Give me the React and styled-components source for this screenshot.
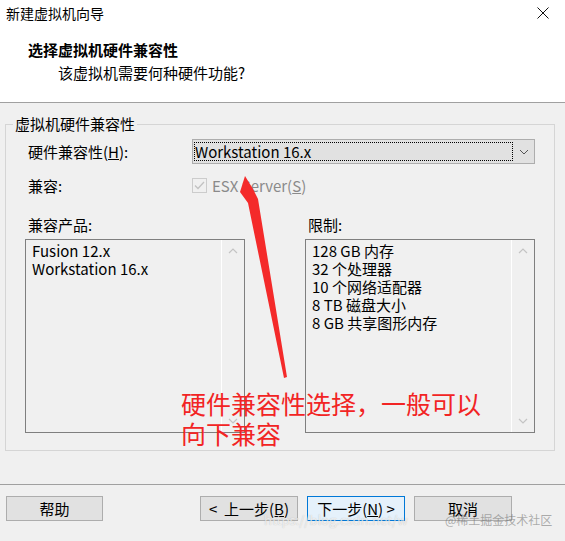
import React from 'react';
import styled, { createGlobalStyle } from 'styled-components';

const GlobalStyle = createGlobalStyle`
  html, body {
    margin: 0;
    padding: 0;
  }
  body {
    width: 565px;
    height: 541px;
    overflow: hidden;
    background: #f0f0f0;
    font-family: "Noto Sans CJK SC", "Noto Sans", sans-serif;
    font-size: 15px;
    color: #000;
  }
`;

const Window = styled.div`
  position: relative;
  width: 565px;
  height: 541px;
  display: flex;
  flex-direction: column;
  background: #f0f0f0;
  overflow: hidden;
`;

const Header = styled.header`
  height: 102px;
  background: #fff;
  border-bottom: 1px solid #a0a0a0;
  display: flex;
  flex-direction: column;
`;

const TitleBar = styled.div`
  height: 26px;
  display: flex;
  align-items: center;
  justify-content: space-between;
  padding: 0 16px 0 6px;
  font-size: 14px;
`;

const Heading = styled.div`
  margin: 13px 0 0 28px;
  line-height: 22px;
  font-weight: 700;
`;

const SubHeading = styled.div`
  margin: 1px 0 0 58px;
  line-height: 22px;
`;

const Body = styled.main`
  flex: 1;
  padding: 0 10px 0 5px;
`;

const Group = styled.fieldset`
  margin: 11px 0 0 0;
  padding: 0 0 17px 0;
  min-width: 0;
  border: 1px solid #d5d5d5;
`;

const Legend = styled.legend`
  margin-left: 7px;
  padding: 0 2px;
  line-height: 20px;
`;

const Content = styled.div`
  padding: 0 19px;
`;

const FieldRow = styled.div`
  display: grid;
  grid-template-columns: 167px 1fr;
  align-items: center;
  height: ${(p) => p.$h}px;
  margin-top: ${(p) => p.$mt}px;
`;

const Label = styled.span`
  padding-left: 3px;
`;

const Combo = styled.div`
  height: 25px;
  box-sizing: border-box;
  border: 1px solid #adadad;
  background: #e1e1e1;
  display: flex;
  align-items: stretch;
  padding: 2px 0 2px 1px;
`;

const Focus = styled.div`
  flex: 1;
  border: 1px dotted #000;
  line-height: 17px;
`;

const ArrowBox = styled.div`
  width: 21px;
  display: flex;
  align-items: center;
  justify-content: center;
`;

const Check = styled.div`
  display: flex;
  align-items: center;
  gap: 5px;
  color: #8a8a8a;
`;

const CheckBox = styled.span`
  width: 13px;
  height: 13px;
  border: 1px solid #cccccc;
  background: #f0f0f0;
  display: flex;
  align-items: center;
  justify-content: center;
`;

const Columns = styled.div`
  display: grid;
  grid-template-columns: 220px 1fr;
  column-gap: 60px;
  margin-top: 21px;
`;

const Column = styled.div`
  display: flex;
  flex-direction: column;
`;

const ListBox = styled.div`
  margin-top: 4px;
  height: 194px;
  box-sizing: border-box;
  border: 1px solid #7f7f7f;
  display: flex;
`;

const Items = styled.div`
  flex: 1;
  padding: 2px 6px;
  line-height: 18px;
`;

const Scroll = styled.div`
  width: 22px;
  border-left: 1px solid #ffffff;
  display: flex;
  flex-direction: column;
  justify-content: space-between;
  align-items: center;
  padding: 8px 0;
`;

const Footer = styled.footer`
  height: 45px;
  border-top: 1px solid #a0a0a0;
  display: flex;
  align-items: flex-start;
  padding: 11px 53px 0 6px;
  gap: 9px;
`;

const Button = styled.button`
  width: ${(p) => p.$w || 98}px;
  height: 25px;
  margin: 0;
  padding: 0;
  font: inherit;
  font-size: 15px;
  color: #000;
  border: 1px solid ${(p) => (p.$primary ? '#0078d7' : '#adadad')};
  background: ${(p) => (p.$primary ? '#e5f1fb' : '#e1e1e1')};
  line-height: 21px;
  white-space: pre;
`;

const Spacer = styled.div`
  flex: 1;
`;

const Note = styled.div`
  position: absolute;
  left: 181px;
  top: 388px;
  font-size: 25px;
  line-height: 30px;
  color: #f22424;
  pointer-events: none;
`;

const Overlay = styled.svg`
  position: absolute;
  left: 0;
  top: 0;
  pointer-events: none;
`;

const Watermark = styled.span`
  position: absolute;
  top: 511px;
  left: ${(p) => p.$x}px;
  font-size: ${(p) => p.$size}px;
  line-height: 18px;
  color: ${(p) => p.$color};
  text-shadow: ${(p) => p.$shadow || 'none'};
  pointer-events: none;
  white-space: nowrap;
`;

const Chevron = ({ up }) => (
  <svg width="10" height="6" viewBox="0 0 10 6">
    <polyline
      points={up ? '1,5 5,1 9,5' : '1,1 5,5 9,1'}
      fill="none"
      stroke="#c4c4c4"
      strokeWidth="1.2"
    />
  </svg>
);

const ScrollBar = () => (
  <Scroll>
    <Chevron up />
    <Chevron />
  </Scroll>
);

const App = () => {
  const products = ['Fusion 12.x', 'Workstation 16.x'];
  const limits = ['128 GB 内存', '32 个处理器', '10 个网络适配器', '8 TB 磁盘大小', '8 GB 共享图形内存'];

  return (
    <Window>
      <GlobalStyle />
      <Header>
        <TitleBar>
          <span>新建虚拟机向导</span>
          <svg width="12" height="12" viewBox="0 0 12 12">
            <path d="M0.5 0.5 L11.5 11.5 M11.5 0.5 L0.5 11.5" stroke="#111" strokeWidth="1" />
          </svg>
        </TitleBar>
        <Heading>选择虚拟机硬件兼容性</Heading>
        <SubHeading>该虚拟机需要何种硬件功能?</SubHeading>
      </Header>

      <Body>
        <Group>
          <Legend>虚拟机硬件兼容性</Legend>
          <Content>
            <FieldRow $h={25} $mt={5}>
              <Label>
                硬件兼容性(<u>H</u>):
              </Label>
              <Combo>
                <Focus>Workstation 16.x</Focus>
                <ArrowBox>
                  <svg width="10" height="6" viewBox="0 0 10 6">
                    <polyline points="1,1 5,5 9,1" fill="none" stroke="#555" strokeWidth="1" />
                  </svg>
                </ArrowBox>
              </Combo>
            </FieldRow>
            <FieldRow $h={18} $mt={11}>
              <Label>兼容:</Label>
              <Check>
                <CheckBox>
                  <svg width="11" height="9" viewBox="0 0 11 9">
                    <polyline points="1,4.5 4,7.5 10,1" fill="none" stroke="#c2c2c2" strokeWidth="1.3" />
                  </svg>
                </CheckBox>
                <span>
                  ESX Server(<u>S</u>)
                </span>
              </Check>
            </FieldRow>
            <Columns>
              <Column>
                <Label>兼容产品:</Label>
                <ListBox>
                  <Items>
                    {products.map((p) => (
                      <div key={p}>{p}</div>
                    ))}
                  </Items>
                  <ScrollBar />
                </ListBox>
              </Column>
              <Column>
                <Label>限制:</Label>
                <ListBox>
                  <Items>
                    {limits.map((l) => (
                      <div key={l}>{l}</div>
                    ))}
                  </Items>
                  <ScrollBar />
                </ListBox>
              </Column>
            </Columns>
          </Content>
        </Group>
      </Body>

      <Footer>
        <Button $w={97}>帮助</Button>
        <Spacer />
        <Button>
          {'<  上一步('}<u>B</u>)
        </Button>
        <Button $primary>
          下一步(<u>N</u>){' >'}
        </Button>
        <Button>取消</Button>
      </Footer>

      <Overlay width="565" height="541" viewBox="0 0 565 541">
        <polygon
          points="245,176 253,189 258,199 287,377 284,378 248,203 240,192"
          fill="#f42a2a"
        />
      </Overlay>
      <Note>
        <div>硬件兼容性选择，一般可以</div>
        <div>向下兼容</div>
      </Note>
      <Watermark
        $x={264}
        $size={13}
        $color="rgba(255,255,255,0.7)"
        $shadow="0 0 1px rgba(120,120,120,0.45)"
      >
        https://blog.csdn.net/w
      </Watermark>
      <Watermark $x={445} $size={12} $color="rgba(110,110,110,0.55)">
        @稀土掘金技术社区
      </Watermark>
    </Window>
  );
};

export default App;
